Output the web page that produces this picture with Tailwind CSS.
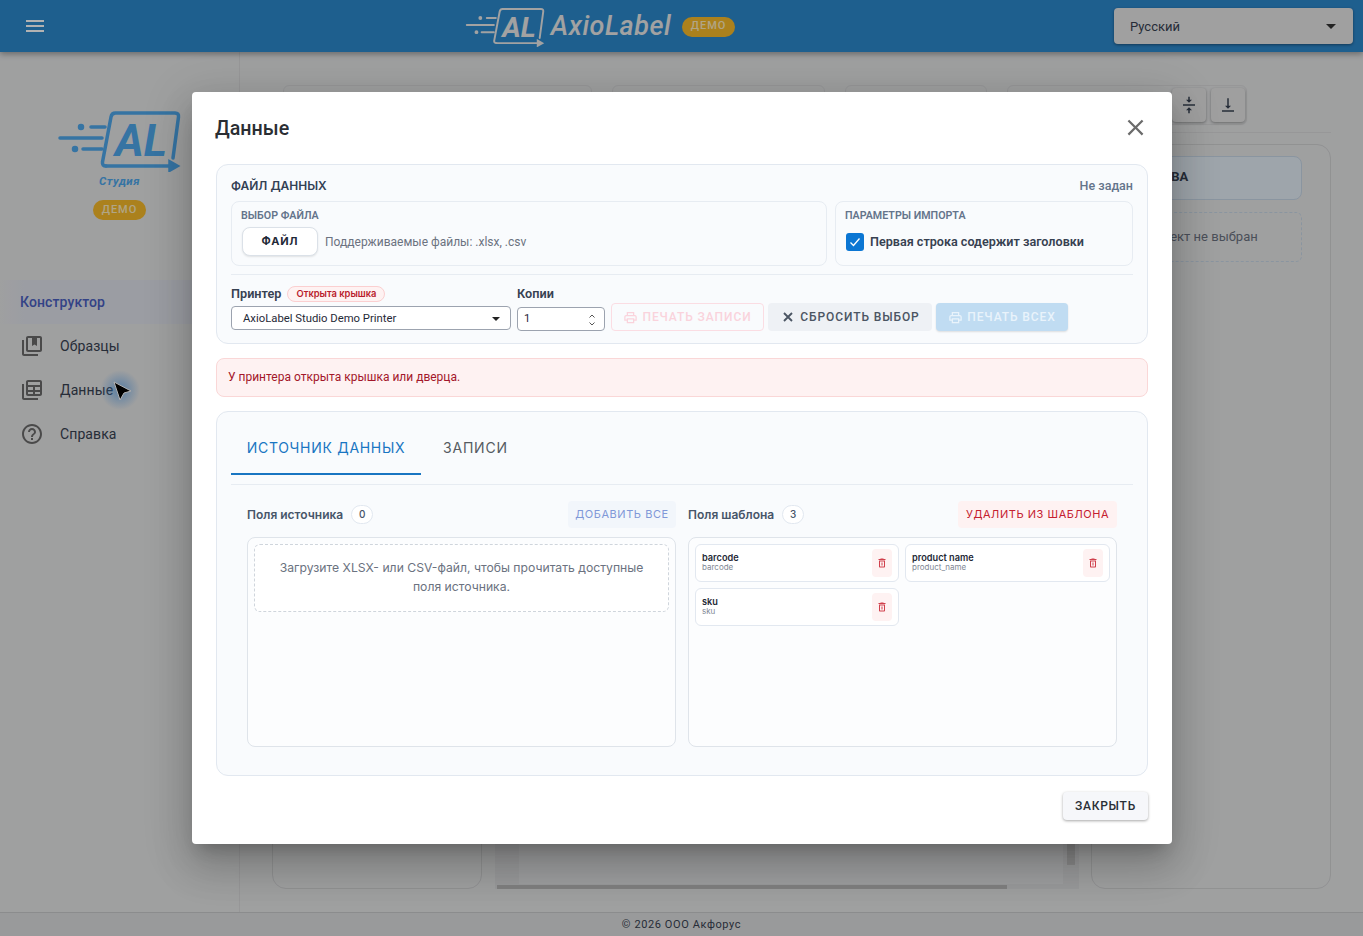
<!DOCTYPE html>
<html lang="ru">
<head>
<meta charset="utf-8">
<title>AxioLabel</title>
<script src="https://cdn.jsdelivr.net/npm/@tailwindcss/browser@4"></script>
</head>
<body class="font-['Roboto',sans-serif]">
<div class="relative w-[1363px] h-[936px] overflow-hidden flex flex-col bg-[#e4e5e6] text-[#1f2937]">
  <!-- App bar -->
  <header class="relative z-10 h-[52px] shrink-0 bg-[#2c88cc] shadow-[0_2px_6px_rgba(0,0,0,0.35)] flex items-center pl-[23px] pr-[10px]">
    <svg class="w-6 h-6 text-white" viewBox="0 0 24 24" fill="currentColor"><path d="M3 18h18v-2H3v2zm0-5h18v-2H3v2zm0-7v2h18V6H3z"/></svg>
    <div class="flex-1 flex items-center justify-center gap-[5px] pl-[39px] pt-[1px]">
      <svg class="w-[81px] h-[40px] text-[#e8e8e8]" viewBox="0 0 124 62" fill="none" stroke="currentColor" stroke-width="3" stroke-linecap="round">
        <path d="M48 56q-4 0-3.500-4L53 7q.7-4 4.500-4H117q4 0 3.500 4L115 48"/><path d="M48 56H114"/><path d="M112 52l7 4-7 4z" fill="currentColor"/><path d="M2 28H44M33 17H47M25 39H44"/><circle cx="23" cy="17" r="1.500" fill="currentColor"/><circle cx="17" cy="39" r="1.500" fill="currentColor"/>
        <text x="83" y="46" text-anchor="middle" font-size="44" font-weight="700" font-style="italic" font-family="Roboto" fill="currentColor" stroke="none">AL</text>
      </svg>
      <span class="text-[27px] leading-none italic font-medium text-[#e8e8e8] tracking-[0.5px]">AxioLabel</span>
      <span class="ml-[6px] h-[20px] w-[53px] rounded-full bg-[#f5b92a] text-[#fdecc0] text-[11px] font-medium tracking-[1px] flex items-center justify-center">ДЕМО</span>
    </div>
    <div class="w-[239px] h-[36px] rounded-[4px] bg-[#e6e6e6] shadow-[0_1px_3px_rgba(0,0,0,0.4)] flex items-center justify-between pl-[16px] pr-[17px] pt-[1px] text-[13px] text-[#374151]">
      <span>Русский</span>
      <span class="w-0 h-0 border-x-[5px] border-x-transparent border-t-[5px] border-t-[#333]"></span>
    </div>
  </header>

  <!-- Body under the dialog -->
  <div class="flex-1 flex min-h-0">
    <aside class="w-[240px] shrink-0 border-r border-[#d8d9da] flex flex-col">
      <div class="h-[228px] flex flex-col items-center pt-[58px] pl-[1px]">
        <svg class="w-[124px] h-[62px] text-[#4ea6ea]" viewBox="0 0 124 62" fill="none" stroke="currentColor" stroke-width="3.500" stroke-linecap="round">
          <path d="M48 56q-4 0-3.500-4L53 7q.7-4 4.500-4H117q4 0 3.500 4L115 48"/><path d="M48 56H114"/><path d="M112 52l7 4-7 4z" fill="currentColor"/><path d="M2 28H44M33 17H47M25 39H44"/><circle cx="23" cy="17" r="1.500" fill="currentColor"/><circle cx="17" cy="39" r="1.500" fill="currentColor"/>
          <text x="83" y="46" text-anchor="middle" font-size="44" font-weight="700" font-style="italic" font-family="Roboto" fill="currentColor" stroke="none">AL</text>
        </svg>
        <span class="mt-[2px] text-[11.500px] leading-[14px] italic font-bold tracking-[0.5px] text-[#4ea6ea] -ml-[1px]">Студия</span>
        <span class="mt-[12px] h-[20px] w-[53px] rounded-full bg-[#f5b92a] text-[#fdecc0] text-[11px] font-medium tracking-[1px] flex items-center justify-center -ml-[1px]">ДЕМО</span>
      </div>
      <nav class="flex flex-col text-[14px] tracking-[0.1px] text-[#374151]">
        <div class="h-[44px] pl-[20px] flex items-center font-medium bg-[linear-gradient(90deg,#e4e5e6,#dfe1ea_10%)] text-[#4a5fc1]">Конструктор</div>
        <div class="h-[44px] pl-[20px] flex items-center gap-[16px]">
          <svg class="w-6 h-6 text-[#6b6b6b]" viewBox="0 0 24 24" fill="currentColor"><path d="M4 6H2v14c0 1.100.9 2 2 2h14v-2H4V6z"/><path d="M20 2H8c-1.100 0-2 .9-2 2v12c0 1.100.9 2 2 2h12c1.100 0 2-.9 2-2V4c0-1.100-.9-2-2-2zm0 14H8V4h4v8l2.500-1.500L17 12V4h3v12z"/></svg>
          <span>Образцы</span>
        </div>
        <div class="relative h-[44px] pl-[20px] flex items-center gap-[16px]">
          <svg class="w-6 h-6 text-[#6b6b6b]" viewBox="0 0 24 24" fill="currentColor"><path d="M4 6H2v14c0 1.100.9 2 2 2h14v-2H4V6z"/><path d="M20 2H8c-1.100 0-2 .9-2 2v12c0 1.100.9 2 2 2h12c1.100 0 2-.9 2-2V4c0-1.100-.9-2-2-2zM8 4h12v3H8V4zm0 5h5v3H8V9zm7 0h5v3h-5V9zm-7 5h5v2H8v-2zm7 0h5v2h-5v-2z"/></svg>
          <span>Данные</span>
          <div class="absolute left-[100px] top-[2px] w-[40px] h-[40px] rounded-full bg-[radial-gradient(circle,rgba(45,140,235,0.55),rgba(45,140,235,0)_70%)]"></div>
          <svg class="absolute left-[112px] top-[13px] w-[20px] h-[20px]" viewBox="0 0 20 20"><path d="M2 1l17 9-7 2-4 7z" fill="#000" stroke="#fff" stroke-width="1"/></svg>
        </div>
        <div class="h-[44px] pl-[20px] flex items-center gap-[16px]">
          <svg class="w-6 h-6 text-[#6b6b6b]" viewBox="0 0 24 24" fill="currentColor"><path d="M11 18h2v-2h-2v2zm1-16C6.480 2 2 6.480 2 12s4.480 10 10 10 10-4.480 10-10S17.520 2 12 2zm0 18c-4.410 0-8-3.590-8-8s3.590-8 8-8 8 3.590 8 8-3.590 8-8 8zm0-14c-2.210 0-4 1.790-4 4h2c0-1.100.9-2 2-2s2 .9 2 2c0 2-3 1.750-3 5h2c0-2.250 3-2.500 3-5 0-2.210-1.790-4-4-4z"/></svg>
          <span>Справка</span>
        </div>
      </nav>
    </aside>
    <main class="flex-1 min-w-0 flex flex-col pl-[32px] pr-[32px] pb-[23px]">
      <div class="h-[81px] shrink-0 flex items-start pt-[33px] pl-[11px] gap-[20px] border-b border-[#d8d9da]">
        <div class="w-[309px] h-[40px] border border-[#d8d9da] rounded-[6px]"></div>
        <div class="w-[213px] h-[40px] border border-[#d8d9da] rounded-[6px]"></div>
        <div class="w-[142px] h-[40px] border border-[#d8d9da] rounded-[6px]"></div>
        <div class="w-[240px] h-[40px] border border-[#d8d9da] rounded-[6px] flex items-center justify-end gap-[5px] pr-[1px]">
          <span class="w-[34px] h-[34px] rounded-[4px] bg-[#e4e4e4] shadow-[0_1px_3px_rgba(0,0,0,0.35)] flex items-center justify-center"><svg class="w-[18px] h-[18px] text-[#374151]" viewBox="0 0 24 24" fill="currentColor"><path d="M8 19h3v4h2v-4h3l-4-4-4 4zm8-14h-3V1h-2v4H8l4 4 4-4zM4 11v2h16v-2H4z"/></svg></span>
          <span class="w-[34px] h-[34px] rounded-[4px] bg-[#e4e4e4] shadow-[0_1px_3px_rgba(0,0,0,0.35)] flex items-center justify-center"><svg class="w-[18px] h-[18px] text-[#374151]" viewBox="0 0 24 24" fill="currentColor"><path d="M16 13h-3V3h-2v10H8l4 4 4-4zM4 19v2h16v-2H4z"/></svg></span>
        </div>
      </div>
      <div class="flex-1 min-h-0 flex gap-[13px] mt-[11px]">
        <div class="w-[210px] border border-[#d0d1d2] rounded-[14px]"></div>
        <div class="w-[584px] relative bg-[#dcdddf] pl-[24px] pr-[16px]">
          <div class="h-[740px] bg-[#e3e4e5]"></div>
          <div class="absolute right-[4px] top-0 bottom-[24px] w-[8px] bg-[#c4c4c4]"></div>
          <div class="absolute left-[2px] bottom-0 w-[510px] h-[4px] bg-[#b8b8b8]"></div>
        </div>
        <div class="flex-1 -ml-[1px] border border-[#d0d1d2] rounded-[14px] pt-[11px] pl-[11px] pr-[28px] flex flex-col gap-[12px]">
          <div class="h-[44px] border border-[#c6d6e6] bg-[#e2ecf5] rounded-[8px] flex items-center pl-[16px] pb-[2px] text-[13px] font-bold text-[#374151]">СВОЙСТВА</div>
          <div class="h-[50px] border border-dashed border-[#c6d6e6] rounded-[6px] flex items-center pl-[37px] text-[13px] text-[#6b7280]"><span class="pl-[5px]">Объект не выбран</span></div>
        </div>
      </div>
    </main>
  </div>
  <footer class="h-[24px] shrink-0 border-t border-[#c8c9ca] bg-[#dcddde] flex items-center justify-center pt-[1px] text-[11px] tracking-[0.6px] text-[#374151]">© 2026 ООО Акфорус</footer>

  <!-- Backdrop -->
  <div class="absolute inset-0 z-20 bg-black/30"></div>

  <!-- Dialog -->
  <div class="absolute z-30 left-[192px] top-[92px] w-[980px] h-[752px] bg-white rounded-[4px] shadow-[0_11px_15px_-7px_rgba(0,0,0,0.2),0_24px_38px_3px_rgba(0,0,0,0.14),0_9px_46px_8px_rgba(0,0,0,0.12)] flex flex-col px-[24px]">
    <div class="h-[72px] shrink-0 flex items-center justify-between">
      <h2 class="text-[19.700px] font-medium text-[#2a2e33] -ml-[1px] pt-[1px]">Данные</h2>
      <svg class="w-[27px] h-[27px] -mr-[1px] mb-[1px] text-[#6b6b6b]" viewBox="0 0 24 24" fill="currentColor"><path d="M19 6.410L17.590 5 12 10.590 6.410 5 5 6.410 10.590 12 5 17.590 6.410 19 12 13.410 17.590 19 19 17.590 13.410 12z"/></svg>
    </div>

    <!-- File section -->
    <section class="h-[180px] shrink-0 border border-[#e2e8f0] rounded-[12px] bg-[#f9fbfd] px-[14px] flex flex-col">
      <div class="h-[36px] shrink-0 flex items-center justify-between pt-[6px]">
        <span class="text-[12px] font-['Inter',sans-serif] font-semibold text-[#334155]">ФАЙЛ ДАННЫХ</span>
        <span class="text-[12.500px] font-medium text-[#64748b]">Не задан</span>
      </div>
      <div class="flex gap-[8px] h-[65px] shrink-0">
        <div class="w-[596px] border border-[#e7ecf2] rounded-[8px] pl-[9px] pr-[10px] pt-[7px]">
          <div class="text-[10.700px] leading-[13px] font-semibold text-[#64748b]">ВЫБОР ФАЙЛА</div>
          <div class="flex items-center gap-[7px] mt-[5px] ml-[1px]">
            <span class="w-[76px] h-[29px] rounded-[8px] border border-[#dbe1e8] bg-white shadow-[0_1px_2px_rgba(0,0,0,0.1)] flex items-center justify-center text-[11px] font-bold tracking-[0.8px] font-['Inter',sans-serif] text-[#1f2937]">ФАЙЛ</span>
            <span class="text-[12px] text-[#6b7280]">Поддерживаемые файлы: .xlsx, .csv</span>
          </div>
        </div>
        <div class="flex-1 border border-[#e7ecf2] rounded-[8px] px-[9px] pt-[7px]">
          <div class="text-[10.700px] leading-[13px] font-semibold text-[#64748b]">ПАРАМЕТРЫ ИМПОРТА</div>
          <div class="flex items-center gap-[6px] mt-[11px] ml-[1px]">
            <span class="w-[18px] h-[18px] rounded-[3px] bg-[#0b76d3] flex items-center justify-center"><svg class="w-[14px] h-[14px]" viewBox="0 0 14 14" fill="none" stroke="#fff" stroke-width="1.300"><path d="M2.500 7.500l3 3 6-7"/></svg></span>
            <span class="text-[12.600px] font-semibold text-[#374151]">Первая строка содержит заголовки</span>
          </div>
        </div>
      </div>
      <div class="border-t border-[#e7ecf2] mt-[8px] flex items-end gap-[6px] h-[57px]">
        <div class="w-[280px] mb-[1px]">
          <div class="flex items-center gap-[6px] h-[16px] mb-[4px]">
            <span class="text-[12.700px] font-semibold text-[#374151]">Принтер</span>
            <span class="h-[16px] px-[8px] rounded-full border border-[#fbcfd0] bg-[#fef2f2] text-[9.400px] font-semibold text-[#b91c2c] flex items-center font-['Inter',sans-serif]">Открыта крышка</span>
          </div>
          <div class="h-[24px] rounded-[4px] border border-[#9ca3af] bg-white flex items-center justify-between pl-[11px] pr-[10px] pt-[2px] text-[11.300px] text-[#1f2937]">
            <span>AxioLabel Studio Demo Printer</span>
            <span class="w-0 h-0 border-x-[4px] border-x-transparent border-t-[4px] border-t-[#222]"></span>
          </div>
        </div>
        <div class="w-[88px]">
          <div class="text-[12.700px] font-semibold text-[#374151] h-[16px] mb-[5px] leading-[16px]">Копии</div>
          <div class="h-[24px] rounded-[4px] border border-[#9ca3af] bg-white flex items-center justify-between pl-[6px] pr-[8px] pt-[1px] text-[11.300px] text-[#1f2937]">
            <span>1</span>
            <svg class="w-[8px] h-[14px]" viewBox="0 0 8 14" fill="none" stroke="#555" stroke-width="1"><path d="M1.500 4.500L4 2l2.500 2.500M1.500 9.500L4 12l2.500-2.500"/></svg>
          </div>
        </div>
        <div class="flex gap-[4px]">
          <span class="w-[153px] h-[28px] rounded-[4px] border border-[#fbdde3] flex items-center justify-center gap-[4px] text-[12px] font-medium tracking-[0.9px] text-[#fad3dc]">
            <svg class="w-[15px] h-[15px]" viewBox="0 0 24 24" fill="currentColor"><path d="M19 8h-1V3H6v5H5c-1.660 0-3 1.340-3 3v6h4v4h12v-4h4v-6c0-1.660-1.340-3-3-3zM8 5h8v3H8V5zm8 12v2H8v-4h8v2zm2-2v-2H6v2H4v-4c0-.55.45-1 1-1h14c.55 0 1 .45 1 1v4h-2z"/></svg>
            ПЕЧАТЬ ЗАПИСИ
          </span>
          <span class="w-[164px] h-[28px] rounded-[4px] bg-[#eef1f5] flex items-center justify-center gap-[4px] text-[12px] font-medium tracking-[0.9px] text-[#4b5563]">
            <svg class="w-[16px] h-[16px]" viewBox="0 0 24 24" fill="none" stroke="currentColor" stroke-width="2.800"><path d="M6 6l12 12M18 6L6 18"/></svg>
            СБРОСИТЬ ВЫБОР
          </span>
          <span class="w-[132px] h-[28px] rounded-[4px] bg-[#c0dcf2] shadow-[0_1px_2px_rgba(0,0,0,0.12)] flex items-center justify-center gap-[4px] text-[12px] font-medium tracking-[0.9px] text-[#e9f3fb]">
            <svg class="w-[15px] h-[15px]" viewBox="0 0 24 24" fill="currentColor"><path d="M19 8h-1V3H6v5H5c-1.660 0-3 1.340-3 3v6h4v4h12v-4h4v-6c0-1.660-1.340-3-3-3zM8 5h8v3H8V5zm8 12v2H8v-4h8v2zm2-2v-2H6v2H4v-4c0-.55.45-1 1-1h14c.55 0 1 .45 1 1v4h-2z"/></svg>
            ПЕЧАТЬ ВСЕХ
          </span>
        </div>
      </div>
    </section>

    <!-- Alert -->
    <div class="mt-[14px] h-[39px] shrink-0 rounded-[8px] border border-[#fad7d7] bg-[#fef2f2] flex items-center pl-[11px] pb-[2px] text-[12px] text-[#a3172a]">У принтера открыта крышка или дверца.</div>

    <!-- Tabs section -->
    <section class="mt-[14px] h-[365px] shrink-0 border border-[#e2e8f0] rounded-[12px] bg-[#f9fbfd] px-[14px] flex flex-col">
      <div class="h-[73px] shrink-0 border-b border-[#e7ecf2] flex items-start">
        <div class="w-[190px] h-[63px] border-b-2 border-[#1976c2] flex items-center justify-center pt-[9px] text-[14px] font-['Inter',sans-serif] tracking-[0.7px] text-[#1976c2]">ИСТОЧНИК ДАННЫХ</div>
        <div class="ml-[22px] h-[63px] flex items-center pt-[8px] text-[14px] font-['Inter',sans-serif] tracking-[0.8px] text-[#555b62]">ЗАПИСИ</div>
      </div>
      <div class="flex-1 grid grid-cols-2 gap-[12px] pl-[16px] pr-[16px] pt-[16px]">
        <div class="flex flex-col">
          <div class="h-[27px] flex items-center justify-between">
            <div class="flex items-center gap-[8px] font-['Inter',sans-serif]">
              <span class="text-[12px] font-semibold text-[#475569]">Поля источника</span>
              <span class="w-[22px] h-[19px] rounded-full border border-[#e2e8f0] bg-white flex items-center justify-center text-[10px] font-medium text-[#475569]">0</span>
            </div>
            <span class="w-[108px] h-[27px] rounded-[4px] bg-[#f2f6fb] flex items-center justify-center text-[11px] font-['Inter',sans-serif] tracking-[0.55px] text-[#8098d8]">ДОБАВИТЬ ВСЕ</span>
          </div>
          <div class="mt-[9px] h-[210px] border border-[#dfe4ea] rounded-[8px] bg-[#fcfdfe] p-[6px]">
            <div class="h-[68px] border border-dashed border-[#cfd5dc] rounded-[6px] bg-white flex items-center justify-center text-center px-[10px] pb-[2px] text-[12.200px] leading-[19px] font-['Inter',sans-serif] text-[#6b7280]">Загрузите XLSX- или CSV-файл, чтобы прочитать доступные поля источника.</div>
          </div>
        </div>
        <div class="flex flex-col">
          <div class="h-[27px] flex items-center justify-between">
            <div class="flex items-center gap-[8px] font-['Inter',sans-serif]">
              <span class="text-[12px] font-semibold text-[#475569]">Поля шаблона</span>
              <span class="w-[22px] h-[19px] rounded-full border border-[#e2e8f0] bg-white flex items-center justify-center text-[10px] font-medium text-[#475569]">3</span>
            </div>
            <span class="w-[159px] h-[27px] rounded-[4px] bg-[#fef2f2] flex items-center justify-center text-[11px] font-['Inter',sans-serif] tracking-[0.55px] text-[#c5202f]">УДАЛИТЬ ИЗ ШАБЛОНА</span>
          </div>
          <div class="mt-[9px] h-[210px] border border-[#dfe4ea] rounded-[8px] bg-[#fcfdfe] p-[6px] grid grid-cols-[204px_205px] gap-[6px] content-start font-['Inter',sans-serif]">
            <div class="h-[38px] border border-[#e2e8f0] rounded-[6px] bg-white flex items-center justify-between pl-[6px] pr-[6px]">
              <div class="leading-[9px] pb-[1px]"><div class="text-[9.200px] font-semibold text-[#1f2937]">barcode</div><div class="mt-[1px] text-[8px] text-[#7f8895]">barcode</div></div>
              <span class="w-[20px] h-[28px] rounded-[4px] bg-[#fef2f2] flex items-center justify-center"><svg class="w-[12px] h-[12px] text-[#d0404c]" viewBox="0 0 24 24" fill="currentColor"><path d="M6 19c0 1.100.9 2 2 2h8c1.100 0 2-.9 2-2V7H6v12zM8 9h8v10H8V9zm7.500-5l-1-1h-5l-1 1H5v2h14V4z"/><path d="M10.500 11h1v6h-1zM12.500 11h1v6h-1z"/></svg></span>
            </div>
            <div class="h-[38px] border border-[#e2e8f0] rounded-[6px] bg-white flex items-center justify-between pl-[6px] pr-[6px]">
              <div class="leading-[9px] pb-[1px]"><div class="text-[9.200px] font-semibold text-[#1f2937]">product name</div><div class="mt-[1px] text-[8px] text-[#7f8895]">product_name</div></div>
              <span class="w-[20px] h-[28px] rounded-[4px] bg-[#fef2f2] flex items-center justify-center"><svg class="w-[12px] h-[12px] text-[#d0404c]" viewBox="0 0 24 24" fill="currentColor"><path d="M6 19c0 1.100.9 2 2 2h8c1.100 0 2-.9 2-2V7H6v12zM8 9h8v10H8V9zm7.500-5l-1-1h-5l-1 1H5v2h14V4z"/><path d="M10.500 11h1v6h-1zM12.500 11h1v6h-1z"/></svg></span>
            </div>
            <div class="h-[38px] border border-[#e2e8f0] rounded-[6px] bg-white flex items-center justify-between pl-[6px] pr-[6px]">
              <div class="leading-[9px] pb-[1px]"><div class="text-[9.200px] font-semibold text-[#1f2937]">sku</div><div class="mt-[1px] text-[8px] text-[#7f8895]">sku</div></div>
              <span class="w-[20px] h-[28px] rounded-[4px] bg-[#fef2f2] flex items-center justify-center"><svg class="w-[12px] h-[12px] text-[#d0404c]" viewBox="0 0 24 24" fill="currentColor"><path d="M6 19c0 1.100.9 2 2 2h8c1.100 0 2-.9 2-2V7H6v12zM8 9h8v10H8V9zm7.500-5l-1-1h-5l-1 1H5v2h14V4z"/><path d="M10.500 11h1v6h-1zM12.500 11h1v6h-1z"/></svg></span>
            </div>
          </div>
        </div>
      </div>
    </section>

    <div class="flex justify-end mt-[16px]">
      <span class="w-[85px] h-[28px] rounded-[4px] bg-[#f6f7fa] shadow-[0_1px_3px_rgba(0,0,0,0.35)] flex items-center justify-center text-[12px] font-medium tracking-[0.75px] text-[#2a2f36]">ЗАКРЫТЬ</span>
    </div>
  </div>
</div>
</body>
</html>
